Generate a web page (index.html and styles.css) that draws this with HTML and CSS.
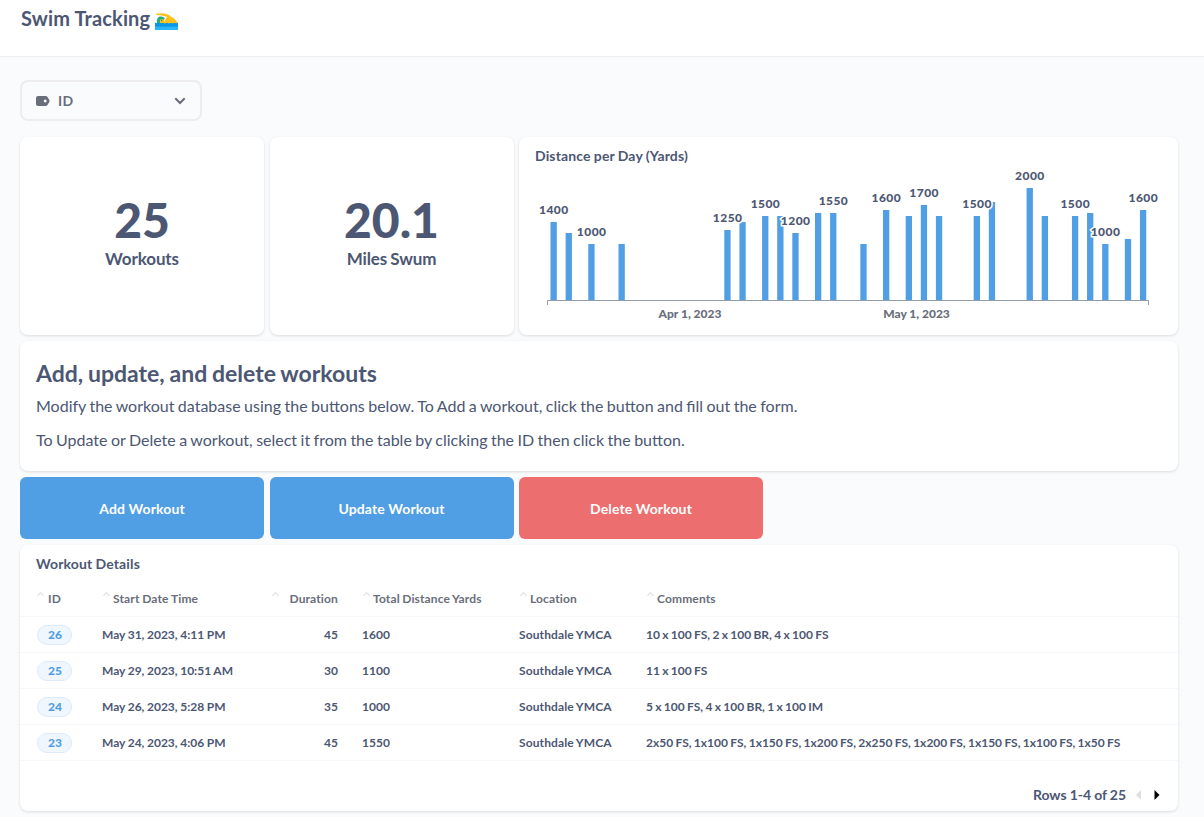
FILE: index.html
```html
<!DOCTYPE html>
<html lang="en">
<head>
<meta charset="utf-8">
<title>Swim Tracking</title>
<link rel="stylesheet" href="styles.css">
</head>
<body>
<header class="header">
  <h1>Swim Tracking</h1>
  <svg class="swimmer" width="23" height="17" viewBox="0 0 23 17">
    <path d="M1.200 .7Q7-.2 11.500 .9Q14.500 1.800 16.500 4Q20.500 5.500 22 9L22.500 11H9L10.500 6L12 4Q9 2.400 1.500 2Q.8 1.300 1.200 .7Z" fill="#fcc21b"/>
    <path d="M2 11Q1.200 5 4.500 3.600Q8 2.800 9.800 5L9 7L8 11Z" fill="#25ad80"/>
    <path d="M5 10Q4.200 6.800 6.500 6Q8.800 5.600 9.300 7.500L10 10Z" fill="#fcc21b"/>
    <path d="M6.700 6.800v1.500" stroke="#27859b" stroke-width="1.200"/>
    <path d="M0 9.500Q2 11 4 9.700Q6 11 8 9.700Q10 11 12 9.700Q14 11 16 9.700Q18 11 20 9.700Q21.500 11 23 9.500V17H0Z" fill="#0795e6"/>
    <path d="M0 13Q2 14.500 4 13.200Q6 14.500 8 13.200Q10 14.500 12 13.200Q14 14.500 16 13.200Q18 14.500 20 13.200Q21.500 14.500 23 13V17H0Z" fill="#29b6f6"/>
  </svg>
</header>
<main class="dashboard">
  <div class="filter">
    <svg width="14" height="10" viewBox="0 0 14 10"><path fill="#696e7b" fill-rule="evenodd" d="M2 0h7.700q1 0 1.600.8l2 3.200q.5 1 0 2l-2 3.200q-.6.800-1.600.8H2Q0 10 0 8V2Q0 0 2 0ZM9.200 3.600a1.400 1.400 0 1 0 .01 0Z"/></svg>
    <span>ID</span>
    <svg class="chevron" width="12" height="8" viewBox="0 0 12 8"><path d="M1.300 1.300L6 6L10.700 1.300" fill="none" stroke="#696e7b" stroke-width="2"/></svg>
  </div>
  <div class="grid">
    <section class="card stat"><strong>25</strong><span>Workouts</span></section>
    <section class="card stat"><strong>20.1</strong><span>Miles Swum</span></section>
    <section class="card chart">
      <h3>Distance per Day (Yards)</h3>
      <svg id="plot" width="659" height="168" viewBox="0 0 659 168">
        <g id="bars" fill="#509ee3"></g>
        <path d="M28.500 138V133.500H629.500V138" fill="none" stroke="#949aab"/>
        <g id="values" class="values"></g>
        <g class="ticks"><text x="171" y="151">Apr 1, 2023</text><text x="397.500" y="151">May 1, 2023</text></g>
      </svg>
    </section>
    <section class="card intro">
      <h2>Add, update, and delete workouts</h2>
      <p>Modify the workout database using the buttons below. To Add a workout, click the button and fill out the form.</p>
      <p>To Update or Delete a workout, select it from the table by clicking the ID then click the button.</p>
    </section>
    <button class="action">Add Workout</button>
    <button class="action">Update Workout</button>
    <button class="action danger">Delete Workout</button>
    <section class="card details">
      <h3>Workout Details</h3>
      <div class="row head">
        <span><i></i>ID</span><span><i></i>Start Date Time</span><span class="num"><i></i>Duration</span><span><i></i>Total Distance Yards</span><span><i></i>Location</span><span><i></i>Comments</span>
      </div>
      <div class="row"><span><b class="pill">26</b></span><span>May 31, 2023, 4:11 PM</span><span class="num">45</span><span>1600</span><span class="place">Southdale YMCA</span><span>10 x 100 FS, 2 x 100 BR, 4 x 100 FS</span></div>
      <div class="row"><span><b class="pill">25</b></span><span>May 29, 2023, 10:51 AM</span><span class="num">30</span><span>1100</span><span class="place">Southdale YMCA</span><span>11 x 100 FS</span></div>
      <div class="row"><span><b class="pill">24</b></span><span>May 26, 2023, 5:28 PM</span><span class="num">35</span><span>1000</span><span class="place">Southdale YMCA</span><span>5 x 100 FS, 4 x 100 BR, 1 x 100 IM</span></div>
      <div class="row"><span><b class="pill">23</b></span><span>May 24, 2023, 4:06 PM</span><span class="num">45</span><span>1550</span><span class="place">Southdale YMCA</span><span>2x50 FS, 1x100 FS, 1x150 FS, 1x200 FS, 2x250 FS, 1x200 FS, 1x150 FS, 1x100 FS, 1x50 FS</span></div>
      <footer class="pager"><span>Rows 1-4 of 25</span>
        <svg width="24" height="10" viewBox="0 0 24 10"><path d="M5 0V10L0 5Z" fill="#dfdfdf"/><path d="M18.500 0V10L23.500 5Z" fill="#000"/></svg>
      </footer>
    </section>
  </div>
</main>
<script src="chart.js"></script>
</body>
</html>
```
FILE: styles.css
```css
* { box-sizing: border-box; }
body { margin: 0; height: 817px; overflow: hidden; background: #fafbfd; color: #4c5773; font-family: Lato, "Open Sans", sans-serif; }
h1, h2, h3, p { margin: 0; }
.header { height: 57px; background: #fff; border-bottom: 1px solid #eeecec; padding: 6px 20px 0 21px; display: flex; align-items: flex-start; gap: 5px; }
.header h1 { font-size: 20px; line-height: 25px; font-weight: 700; letter-spacing: .13px; }
.swimmer { margin-top: 7px; }
.dashboard { padding: 23px 26px 0 20px; }
.filter { width: 182px; height: 41px; border: 2px solid #eeecec; border-radius: 8px; display: flex; align-items: center; padding: 0 14px; color: #696e7b; font-weight: 700; font-size: 14px; letter-spacing: .3px; }
.filter span { margin-left: 8px; }
.chevron { margin-left: auto; }
.grid { margin-top: 16px; display: grid; grid-template-columns: 244px 244px 244px 1fr; grid-template-rows: 198px 130px 62px 266px; column-gap: 5.500px; row-gap: 6px; }
.card { background: #fff; border-radius: 8px; box-shadow: 0 1px 3px rgba(0, 0, 0, .13); }
.stat { display: flex; flex-direction: column; align-items: center; padding: 54px 0 0; }
.stat strong { font-size: 48px; line-height: 58px; font-weight: 900; }
.stat span { font-size: 17px; line-height: 20px; font-weight: 700; letter-spacing: -.1px; word-spacing: -1px; }
.chart { grid-column: 3 / 5; }
.chart h3, .details h3 { font-size: 14px; line-height: 18px; font-weight: 700; padding: 10px 16px 2px; letter-spacing: .14px; word-spacing: -.4px; }
.chart svg { display: block; }
.values, .ticks { font-size: 12px; font-weight: 900; text-anchor: middle; }
.values { fill: #4c5773; stroke: #fff; stroke-width: 3px; paint-order: stroke; letter-spacing: .45px; }
.ticks { fill: #696e7b; }
.intro { grid-column: 1 / 5; padding: 17px 16px 0; }
.intro h2 { font-size: 23px; line-height: 30px; margin-bottom: 6px; word-spacing: -.8px; }
.intro p { font-size: 16px; line-height: 24px; margin-bottom: 10px; word-spacing: -.64px; }
.action { border: 0; border-radius: 6px; background: #509ee3; color: #fff; font: 700 14px Lato, sans-serif; letter-spacing: .12px; }
.danger { background: #ed6e6e; }
.details { grid-column: 1 / 5; grid-row: 4; }
.row { display: grid; grid-template-columns: 66px 170px 66px 181px 127px 1fr; height: 36px; align-items: center; padding-left: 16px; border-bottom: 1px solid #f7f7f8; font-size: 12px; font-weight: 700; white-space: nowrap; word-spacing: -.6px; }
.row .num { text-align: right; }
.row span:nth-child(4) { padding-left: 24px; }
.row span:nth-child(2) { word-spacing: -.35px; }
.row .place { letter-spacing: .12px; }
.head { color: #696e7b; height: 42px; padding-top: 6px; letter-spacing: .14px; }
.head span { display: flex; align-items: center; }
.head i { width: 5px; height: 5px; border: solid #dddfe3; border-width: 1.500px 0 0 1.500px; transform: translateY(-1px) rotate(45deg); margin: 0 4px 4px 2px; }
.head span:first-child i { margin-right: 5px; }
.head .num i { margin-right: auto; margin-left: 1px; }
.pill { display: inline-flex; justify-content: center; align-items: center; width: 35px; height: 20px; margin-left: 1px; border: 1px solid #dceafa; border-radius: 10px; background: #f0f6fd; color: #509ee3; padding-left: 1px; }
.pager { display: flex; justify-content: flex-end; align-items: center; gap: 10px; padding: 24px 18px 0 0; font-size: 14px; line-height: 20px; font-weight: 700; word-spacing: -.4px; }
```
FILE: chart.js
```js
// Each entry: day offset from the first workout, bar top, optional label.
const workouts = [
  [0, 55, 1400], [2, 66], [5, 77, 1000], [9, 77], [23, 63, 1250], [25, 55],
  [28, 49, 1500], [30, 49], [32, 66, 1200], [35, 46], [37, 46, 1550], [41, 77],
  [44, 43, 1600], [47, 49], [49, 38, 1700], [51, 49], [56, 49, 1500], [58, 35],
  [63, 21, 2000], [65, 49], [69, 49, 1500], [71, 46], [73, 77, 1000], [76, 72], [78, 43, 1600]
];
const ns = "http://www.w3.org/2000/svg";
function add(parent, tag, attrs, text) {
  const node = document.createElementNS(ns, tag);
  for (const key in attrs) node.setAttribute(key, attrs[key]);
  if (text) node.textContent = text;
  document.getElementById(parent).appendChild(node);
}
for (const [day, top, value] of workouts) {
  const center = 34.65 + day * 7.557;
  add("bars", "rect", { x: center - 3.15, y: top, width: 6.3, height: 133 - top });
  if (value) add("values", "text", { x: center + 0.2, y: top - 8 }, value);
}
```
